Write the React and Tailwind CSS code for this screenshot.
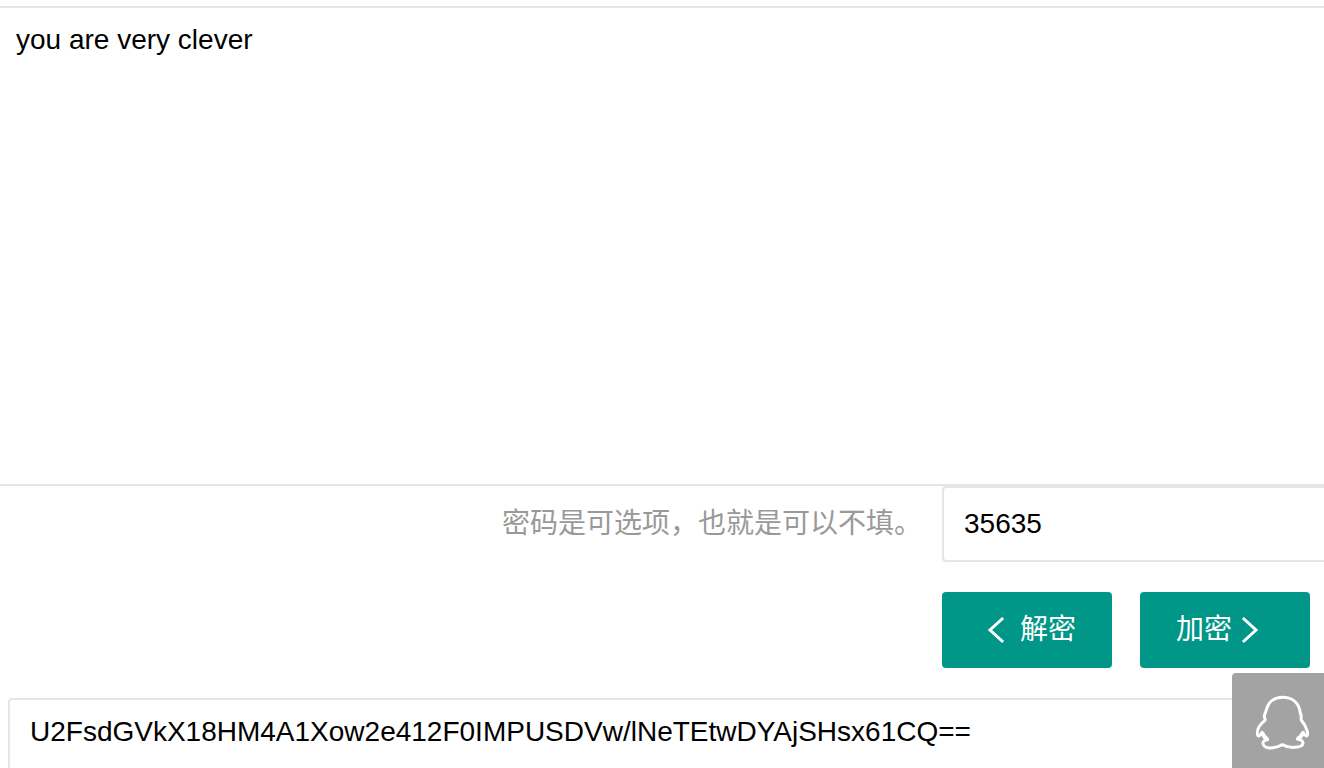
import { useState } from "react";

function ChevronIcon({ points }) {
  return (
    <svg viewBox="0 0 20 30" className="h-[30px] w-5 shrink-0" fill="none" stroke="currentColor" strokeWidth="3" strokeLinecap="square" aria-hidden="true">
      <polyline points={points} />
    </svg>
  );
}

function ContactButton() {
  return (
    <button type="button" aria-label="QQ" className="fixed right-0 bottom-0 h-[95px] w-[92px] rounded-tl bg-[#9f9f9f] text-white opacity-95">
      <svg viewBox="36 39 276 285" className="h-full w-full" fill="none" stroke="currentColor" strokeWidth="9" strokeLinejoin="round" aria-hidden="true">
        <path d="M188 112 C162 112 145 127 139 149 C138 157 133 161 133 168 C132 173 137 176 135 181 C122 191 112 205 112 218 C112 224 114 228 117 228 C122 227 124 221 126 217 C129 227 134 234 143 239 C134 240 128 244 129 251 C130 260 141 264 151 264 C167 264 177 259 187 254 C198 260 211 263 225 262 C238 261 248 258 249 250 C249 243 243 239 232 237 C241 233 247 226 250 217 C253 223 256 228 260 228 C264 226 264 216 260 209 C257 198 250 188 244 181 C242 175 245 171 243 165 C241 160 240 156 239 149 C233 127 215 112 188 112 Z" />
        <path d="M126 217 C130 228 136 234 143 239 M250 217 C246 227 241 233 232 237" strokeWidth="12" />
      </svg>
    </button>
  );
}

export default function App() {
  const [content, setContent] = useState("you are very clever");
  const [password, setPassword] = useState("35635");
  const [result, setResult] = useState("U2FsdGVkX18HM4A1Xow2e412F0IMPUSDVw/lNeTEtwDYAjSHsx61CQ==");

  return (
    <div className="flex h-screen flex-col overflow-hidden bg-white pt-1.5 font-['Liberation_Sans','Noto_Sans_CJK_SC',sans-serif] text-[28px] leading-9 text-black">
      <textarea
        aria-label="明文"
        className="block min-h-0 w-full flex-1 resize-none border-y-2 border-[#e6e6e6] px-4 py-3.5 outline-none"
        value={content}
        onChange={(e) => setContent(e.target.value)}
      />
      <div className="flex">
        <label htmlFor="password" className="flex-1 pt-5 pr-5 text-right text-[#999]">
          密码是可选项，也就是可以不填。
        </label>
        <div className="w-[382px] shrink-0">
          <input
            id="password"
            type="text"
            className="block h-[76px] w-full rounded-l border-2 border-r-0 border-[#e6e6e6] px-5 outline-none"
            value={password}
            onChange={(e) => setPassword(e.target.value)}
          />
          <div className="flex gap-7 py-[30px]">
            <button type="button" className="flex h-[76px] w-[170px] items-center gap-3.5 rounded bg-[#009688] pl-11 text-white">
              <ChevronIcon points="16,4 4,15 16,26" />
              解密
            </button>
            <button type="button" className="flex h-[76px] w-[170px] items-center gap-2 rounded bg-[#009688] pl-9 text-white">
              加密
              <ChevronIcon points="4,4 16,15 4,26" />
            </button>
          </div>
        </div>
      </div>
      <div className="pl-2">
        <textarea
          aria-label="密文"
          className="block h-[70px] w-full resize-none overflow-hidden rounded-tl border-t-2 border-l-2 border-[#e6e6e6] px-5 pt-3.5 outline-none"
          value={result}
          onChange={(e) => setResult(e.target.value)}
        />
      </div>
      <ContactButton />
    </div>
  );
}
